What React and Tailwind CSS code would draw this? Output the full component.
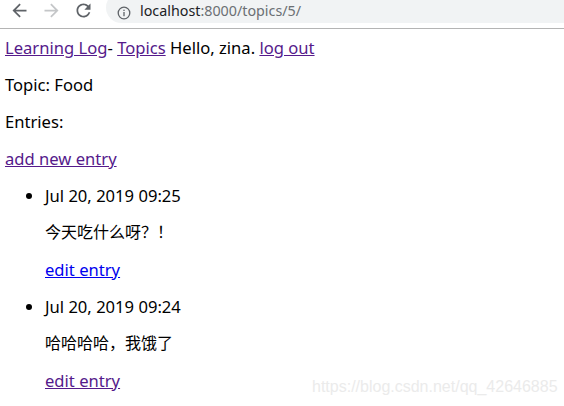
import React from "react";

function BackIcon({ color }) {
  return (
    <svg width="21" height="21" viewBox="0 0 24 24" fill={color}>
      <path d="M20 11H7.83l5.59-5.59L12 4l-8 8 8 8 1.41-1.41L7.83 13H20v-2z" />
    </svg>
  );
}

function ForwardIcon({ color }) {
  return (
    <svg width="21" height="21" viewBox="0 0 24 24" fill={color}>
      <path d="M4 11h12.17l-5.59-5.59L12 4l8 8-8 8-1.41-1.41L16.17 13H4v-2z" />
    </svg>
  );
}

function ReloadIcon() {
  return (
    <svg width="21" height="21" viewBox="0 0 24 24" fill="#5f6368">
      <path d="M17.65 6.35C16.2 4.9 14.21 4 12 4c-4.42 0-7.99 3.58-7.99 8s3.57 8 7.99 8c3.73 0 6.84-2.55 7.73-6h-2.08c-.82 2.33-3.04 4-5.65 4-3.31 0-6-2.69-6-6s2.69-6 6-6c1.66 0 3.14.69 4.22 1.78L13 11h7V4l-2.35 2.35z" />
    </svg>
  );
}

function InfoIcon() {
  return (
    <svg width="14" height="14" viewBox="0 0 14 14">
      <circle cx="7" cy="7" r="5.8" fill="none" stroke="#5f6368" strokeWidth="1.3" />
      <rect x="6.35" y="6" width="1.3" height="4.2" fill="#5f6368" />
      <rect x="6.35" y="3.7" width="1.3" height="1.3" fill="#5f6368" />
    </svg>
  );
}

const entries = [
  { date: "Jul 20, 2019 09:25", text: "今天吃什么呀？！", visited: false },
  { date: "Jul 20, 2019 09:24", text: "哈哈哈哈，我饿了", visited: true },
];

export default function App() {
  return (
    <div className="relative w-[564px] h-[406px] overflow-hidden bg-white">
      {/* TOOLBAR */}
      <div className="flex h-[29px] items-start border-b border-[#b4b4b4] bg-white">
        <div className="ml-[9px] flex gap-[11px]">
          <BackIcon color="#5f6368" />
          <ForwardIcon color="#c4c6c8" />
          <ReloadIcon />
        </div>
        <div className="ml-[12px] mt-[-8px] flex h-[31px] flex-1 items-end rounded-l-full bg-[#f1f3f4] pb-[3px] pl-[11px]">
          <InfoIcon />
          <span className="ml-[9px] text-[14.3px] leading-[18px] font-['Noto_Sans',sans-serif]">
            <span className="text-[#202124]">localhost</span>
            <span className="text-[#6b6f73]">:8000/topics/5/</span>
          </span>
        </div>
      </div>

      {/* PAGE */}
      <div className="px-[5px] pt-[8px] text-[16.6px] leading-[21px] text-black font-['Noto_Sans','Noto_Sans_CJK_SC',sans-serif]">
        <div>
          <a href="#" className="text-[#551a8b] underline">Learning Log</a>
          - <a href="#" className="text-[#551a8b] underline">Topics</a>
          {" "}Hello, zina. <a href="#" className="text-[#551a8b] underline">log out</a>
        </div>

        <p className="mt-4">Topic: Food</p>
        <p className="mt-4">Entries:</p>
        <p className="mt-4">
          <a href="#" className="text-[#551a8b] underline">add new entry</a>
        </p>

        <ul className="mt-4 list-disc pl-10">
          {entries.map((e) => (
            <li key={e.date}>
              <p className="mb-4">{e.date}</p>
              <p className="mb-4 text-[16px]">{e.text}</p>
              <p className="mb-4">
                <a
                  href="#"
                  className={`${e.visited ? "text-[#551a8b]" : "text-[#0000ee]"} underline`}
                >
                  edit entry
                </a>
              </p>
            </li>
          ))}
        </ul>
      </div>

      {/* WATERMARK */}
      <div className="absolute left-[312px] top-[377px] text-[16px] leading-[20px] text-[#ebebeb] font-['Liberation_Sans',sans-serif]">
        https://blog.csdn.net/qq_42646885
      </div>
    </div>
  );
}
